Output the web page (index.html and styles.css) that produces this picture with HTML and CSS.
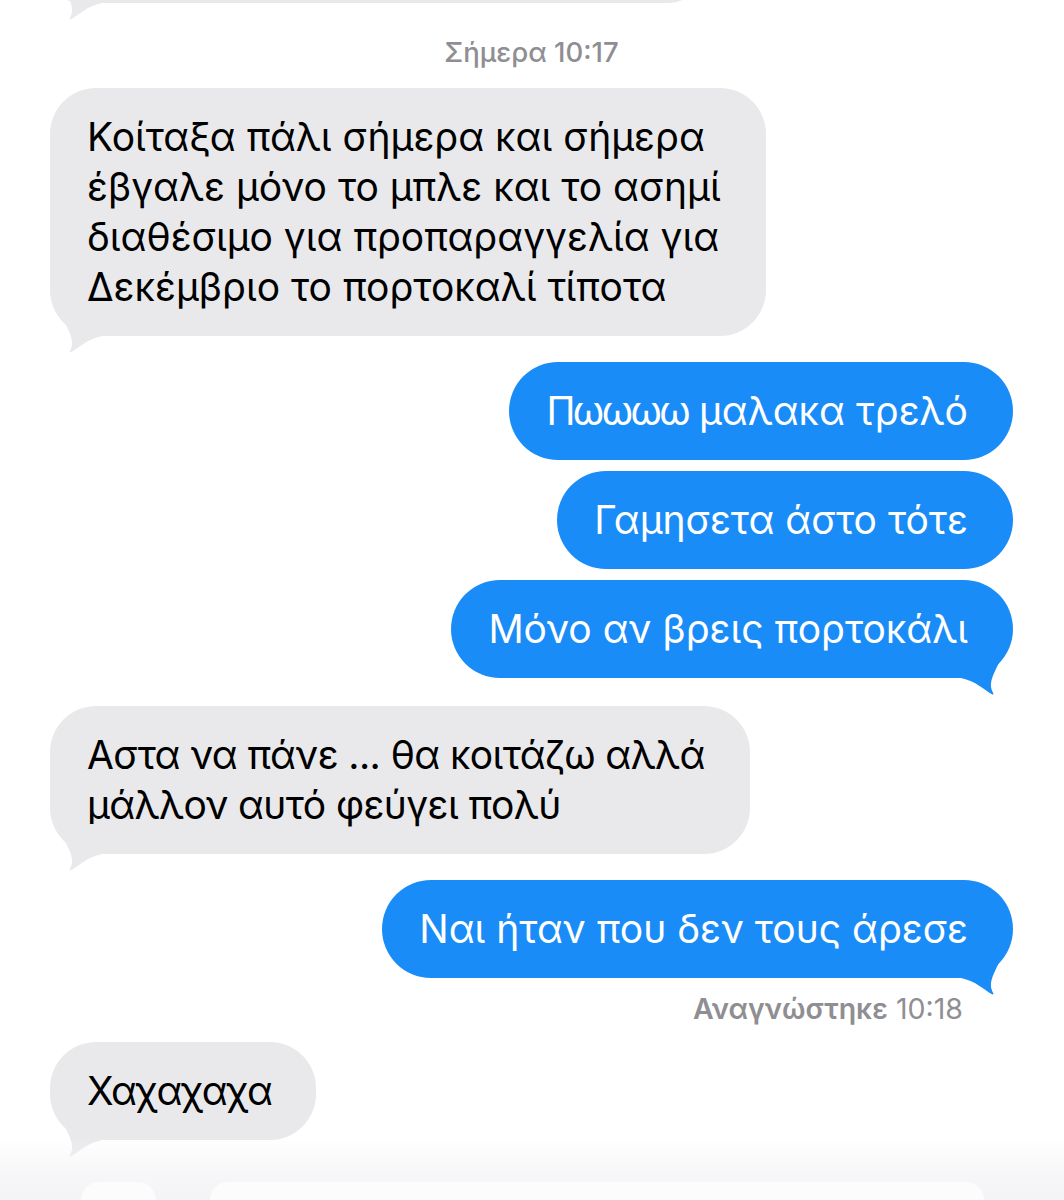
FILE: index.html
```html
<!DOCTYPE html>
<html lang="el">
<head>
<meta charset="utf-8">
<title>Μηνύματα</title>
<link rel="stylesheet" href="styles.css">
</head>
<body>
<main class="thread">
  <div class="bubble in clipped">
    <svg class="tail" viewBox="0 -30 60 50" aria-hidden="true"><path d="M6,-30 L10,-24 C16,-10 23,0 22,9 C21.5,12 20.5,14 19.5,15.5 Q19.5,16.8 21,16.3 C29,12 37,3 52,0 L52,-30 Z"/></svg>
  </div>

  <div class="stamp">Σήμερα 10:17</div>

  <div class="bubble in first">
    Κοίταξα πάλι σήμερα και σήμερα<br>έβγαλε μόνο το μπλε και το ασημί<br>διαθέσιμο για προπαραγγελία για<br>Δεκέμβριο το πορτοκαλί τίποτα
    <svg class="tail" viewBox="0 -30 60 50" aria-hidden="true"><path d="M6,-30 L10,-24 C16,-10 23,0 22,9 C21.5,12 20.5,14 19.5,15.5 Q19.5,16.8 21,16.3 C29,12 37,3 52,0 L52,-30 Z"/></svg>
  </div>

  <div class="bubble out group-start"><span class="narrower">Πωωωω</span> μαλακα τρελό</div>
  <div class="bubble out">Γαμησετα άστο τότε</div>
  <div class="bubble out">Μόνο αν βρεις πορτοκάλι
    <svg class="tail" viewBox="0 -30 60 50" aria-hidden="true"><path d="M6,-30 L10,-24 C16,-10 23,0 22,9 C21.5,12 20.5,14 19.5,15.5 Q19.5,16.8 21,16.3 C29,12 37,3 52,0 L52,-30 Z"/></svg>
  </div>

  <div class="bubble in group-start condensed">
    Αστα να πάνε ... θα κοιτάζω αλλά<br>μάλλον αυτό φεύγει πολύ
    <svg class="tail" viewBox="0 -30 60 50" aria-hidden="true"><path d="M6,-30 L10,-24 C16,-10 23,0 22,9 C21.5,12 20.5,14 19.5,15.5 Q19.5,16.8 21,16.3 C29,12 37,3 52,0 L52,-30 Z"/></svg>
  </div>

  <div class="bubble out group-start">Ναι ήταν που δεν τους άρεσε
    <svg class="tail" viewBox="0 -30 60 50" aria-hidden="true"><path d="M6,-30 L10,-24 C16,-10 23,0 22,9 C21.5,12 20.5,14 19.5,15.5 Q19.5,16.8 21,16.3 C29,12 37,3 52,0 L52,-30 Z"/></svg>
  </div>
  <div class="receipt"><b>Αναγνώστηκε</b> 10:18</div>

  <div class="bubble in last">
    <span class="narrow">Χαχαχαχα</span>
    <svg class="tail" viewBox="0 -30 60 50" aria-hidden="true"><path d="M6,-30 L10,-24 C16,-10 23,0 22,9 C21.5,12 20.5,14 19.5,15.5 Q19.5,16.8 21,16.3 C29,12 37,3 52,0 L52,-30 Z"/></svg>
  </div>
</main>

<div class="composer" aria-hidden="true">
  <div class="composer-btn"></div>
  <div class="composer-field"></div>
</div>
</body>
</html>
```
FILE: styles.css
```css
html, body {
  margin: 0;
  padding: 0;
  background: #ffffff;
}

body {
  width: 1064px;
  height: 1200px;
  overflow: hidden;
  position: relative;
  font-family: Inter, "Noto Sans", sans-serif;
  -webkit-font-smoothing: antialiased;
}

.thread {
  display: flex;
  flex-direction: column;
  padding: 0 51px 0 50px;
}

.bubble {
  position: relative;
  box-sizing: border-box;
  max-width: 760px;
  padding: 24px 45px 24px 37px;
  font-size: 39px;
  line-height: 50px;
  border-radius: 46px;
  white-space: nowrap;
}

.bubble.out {
  border-radius: 49px;
}

.bubble.in {
  align-self: flex-start;
  background: #e9e9eb;
  color: #000000;
}

.bubble.out {
  align-self: flex-end;
  background: #1a8cf7;
  color: #ffffff;
  margin-top: 11px;
}

.bubble.out.group-start {
  margin-top: 26px;
}

.bubble.in.group-start {
  margin-top: 28px;
}

.narrow {
  letter-spacing: -1.4px;
}

.narrower {
  letter-spacing: -2.6px;
}

.condensed {
  letter-spacing: -0.6px;
}

.bubble.clipped {
  width: 649px;
  height: 60px;
  margin-top: -57px;
}

.tail {
  position: absolute;
  bottom: -20px;
  width: 60px;
  height: 50px;
  overflow: visible;
}

.in .tail {
  left: 0;
  fill: #e9e9eb;
}

.out .tail {
  right: 0;
  fill: #1a8cf7;
  transform: scaleX(-1);
}

.stamp {
  align-self: center;
  margin: 33px 0 20px;
  line-height: 32px;
  font-size: 27.5px;
  font-weight: 500;
  color: #8e8e93;
}

.receipt {
  align-self: flex-end;
  margin: 16px 50px 0 0;
  line-height: 30px;
  font-size: 28.5px;
  color: #8e8e93;
}

.receipt b {
  font-weight: 600;
}

.bubble.last {
  margin-top: 18px;
}

.composer {
  position: absolute;
  left: 0;
  right: 0;
  bottom: 0;
  height: 62px;
  display: flex;
  align-items: flex-end;
  gap: 54px;
  padding: 0 80px 0 81px;
  background: linear-gradient(to bottom, rgba(246, 246, 248, 0), rgba(245, 245, 247, 0.85) 60%, #f4f4f6);
}

.composer-btn {
  width: 75px;
  height: 18px;
  border-radius: 38px 38px 0 0;
  background: #fcfcfd;
}

.composer-field {
  flex: 1;
  height: 18px;
  border-radius: 30px 30px 0 0;
  background: #fcfcfd;
}
```
